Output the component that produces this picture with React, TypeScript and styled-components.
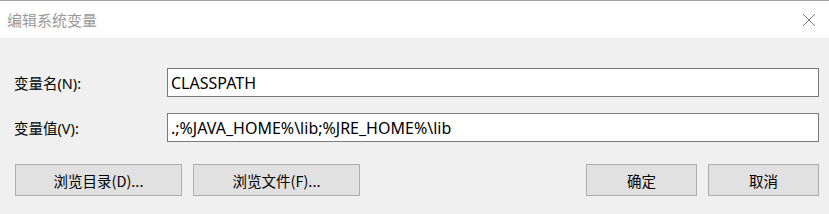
import React from "react";
import styled, { createGlobalStyle } from "styled-components";

const GlobalStyle = createGlobalStyle`
  html, body {
    margin: 0;
    padding: 0;
    background: #f0f0f0;
  }
  body {
    font-family: "Noto Sans", "Noto Sans CJK SC", sans-serif;
  }
`;

const Dialog = styled.div`
  width: 829px;
  height: 214px;
  display: flex;
  flex-direction: column;
  background: #f0f0f0;
  border-top: 1px solid #a0a0a0;
  box-sizing: border-box;
  overflow: hidden;
`;

const TitleBar = styled.div`
  height: 37px;
  background: #ffffff;
  display: flex;
  align-items: center;
  justify-content: space-between;
  padding: 0 8px 0 7px;
  box-sizing: border-box;
`;

const Title = styled.div`
  font-family: "Noto Sans CJK SC", sans-serif;
  font-size: 15px;
  color: #999999;
`;

const CloseButton = styled.div`
  width: 16px;
  height: 16px;
  display: flex;
  align-items: center;
  justify-content: center;
  margin-right: 4px;
`;

const Body = styled.div`
  flex: 1;
  display: flex;
  flex-direction: column;
  padding: 30px 10px 0 14px;
`;

const Row = styled.div`
  display: flex;
  align-items: center;
  margin-bottom: 16px;
`;

const Label = styled.div`
  width: 153px;
  font-family: "Noto Sans", "Noto Sans CJK SC", sans-serif;
  font-size: 14.5px;
  color: #000000;
`;

const Field = styled.div`
  flex: 1;
  height: 29px;
  box-sizing: border-box;
  background: #ffffff;
  border: 1px solid #7a7a7a;
  display: flex;
  align-items: center;
  padding-left: 3px;
  font-size: 16px;
  color: #000000;
  white-space: nowrap;
`;

const ButtonBar = styled.div`
  display: flex;
  justify-content: space-between;
  margin-top: 6px;
  padding-left: 1px;
`;

const Group = styled.div`
  display: flex;
  gap: 11px;
`;

const Button = styled.div<{ $w: number }>`
  width: ${(p) => p.$w}px;
  height: 32px;
  box-sizing: border-box;
  background: #e1e1e1;
  border: 1px solid #adadad;
  display: flex;
  align-items: center;
  justify-content: center;
  font-family: "Noto Sans CJK SC", sans-serif;
  font-size: 14.5px;
  color: #000000;
`;

export default function App() {
  return (
    <>
      <GlobalStyle />
      <Dialog>
        <TitleBar>
          <Title>编辑系统变量</Title>
          <CloseButton>
            <svg width="14" height="14" viewBox="0 0 14 14">
              <path d="M1 1 L13 13 M13 1 L1 13" stroke="#7a7a7a" strokeWidth="1" fill="none" />
            </svg>
          </CloseButton>
        </TitleBar>
        <Body>
          <Row>
            <Label>变量名(N):</Label>
            <Field>CLASSPATH</Field>
          </Row>
          <Row>
            <Label>变量值(V):</Label>
            <Field>.;%JAVA_HOME%\lib;%JRE_HOME%\lib</Field>
          </Row>
          <ButtonBar>
            <Group>
              <Button $w={167}>浏览目录(D)...</Button>
              <Button $w={167}>浏览文件(F)...</Button>
            </Group>
            <Group>
              <Button $w={111}>确定</Button>
              <Button $w={111}>取消</Button>
            </Group>
          </ButtonBar>
        </Body>
      </Dialog>
    </>
  );
}
